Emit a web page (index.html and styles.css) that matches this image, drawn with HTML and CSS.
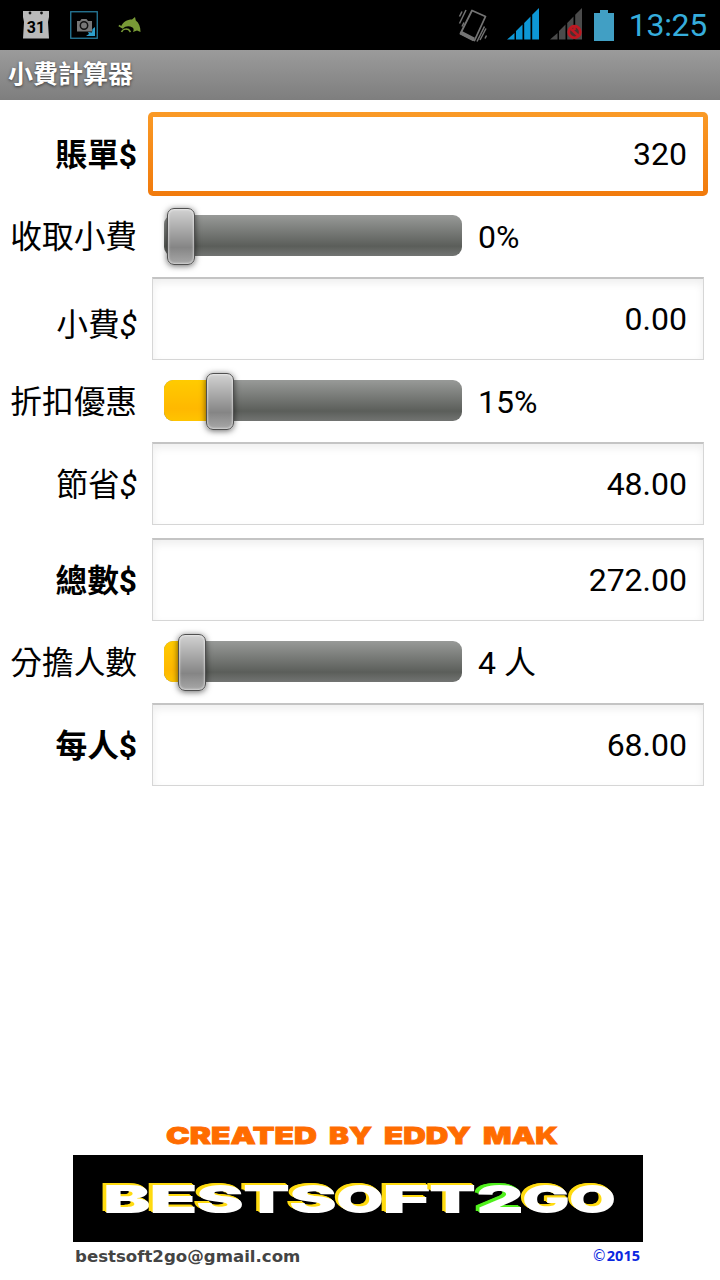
FILE: index.html
```html
<!DOCTYPE html>
<html lang="zh-Hant">
<head>
  <meta charset="UTF-8">
  <meta name="viewport" content="width=device-width, initial-scale=1.0">
  <title>小費計算器</title>
  <link rel="stylesheet" href="styles.css">
</head>
<body>

  <div class="status-bar">
    <div class="notifications">
      <svg class="icon-calendar" width="28" height="30" viewBox="0 0 28 30">
        <path d="M1 1h4a2.600 2.600 0 0 0 5 0h8a2.600 2.600 0 0 0 5 0h4v6l-1 5 1 16.500H1L2 12 1 7z" fill="#b9b9b9"/>
        <path d="M1 1h26v6H1z" fill="#b9b9b9"/>
        <circle cx="8" cy="3" r="1.400" fill="#111"/>
        <circle cx="19.500" cy="3" r="1.400" fill="#111"/>
        <text x="14" y="23" text-anchor="middle" class="calendar-day">31</text>
      </svg>
      <svg class="icon-camera" width="28" height="28" viewBox="0 0 28 28">
        <rect x=".75" y=".75" width="26.500" height="26.500" fill="none" stroke="#277b9b" stroke-width="1.300"/>
        <path d="M7 10h3l1.500-2h5l1.500 2h4v10.500H7z" fill="#777"/>
        <circle cx="14" cy="14.500" r="3.700" fill="#777" stroke="#111" stroke-width="1.500"/>
        <path d="M25 16v9h-9l3-2-1-2 4 .5.500-3.500z" fill="#2e9fcc"/>
      </svg>
      <svg class="icon-dolphin" width="24" height="17" viewBox="0 0 24 17">
        <path d="M3 9.500C5 5 9 2.500 14 2.500L17 0l.8 3.500C21 6 22.500 9.500 22.500 15l-3.500-1.500L15 15c1-2 .8-3.500-.5-4.500C11 8.500 7.500 9 5 11.500z" fill="#789a36"/>
        <path d="M.8 8.500l4.500 2.500M3.500 15c1-2.500 4-3.500 7-2.500l2 2.500" fill="none" stroke="#789a36" stroke-width="1.600"/>
      </svg>
    </div>
    <div class="system-icons">
      <svg class="icon-vibrate" width="30" height="35" viewBox="0 0 30 35">
        <path d="M14 2.500l13.500 6-11 24-14-7z" fill="none" stroke="#747474" stroke-width="1.800" stroke-linejoin="round"/>
        <path d="M2.500 24.500l13.500 7" stroke="#747474" stroke-width="4"/>
        <path d="M1.500 8l2.500-5M1.500 15L8 1.500M4 18l2-4M19 33l7.500-15M22 31.500l6-11.500M27 30l1.500-3" transform="translate(0 .5)" stroke="#747474" stroke-width="1.500"/>
      </svg>
      <svg class="icon-signal" width="32" height="32" viewBox="0 0 32 32">
        <path d="M0 31.500L7.500 25v6.500zM9 23l6.500-6.500v15H9zM17.200 15l6.300-6.500v23h-6.300zM25.200 6.800L32 0v31.500h-6.800z" fill="#0d97d6"/>
      </svg>
      <svg class="icon-no-signal" width="32" height="34" viewBox="0 0 32 34">
        <path d="M0 31.500L7.500 25v6.500zM9 23l6.500-6.500v15H9zM17.200 15l6.300-6.500v23h-6.300zM25.200 6.800L32 0v31.500h-6.800z" fill="#4b4b4b"/>
        <circle cx="24.500" cy="24" r="5.800" fill="#4b3030" stroke="#be1822" stroke-width="2.800"/>
        <path d="M20 20l8.500 8M24.500 19v3" stroke="#be1822" stroke-width="2.500"/>
      </svg>
      <svg class="icon-battery" width="20" height="31" viewBox="0 0 20 31">
        <path d="M6 0h8v3h6v28H0V3h6z" fill="#419fc4"/>
      </svg>
      <span class="clock">13:25</span>
    </div>
  </div>

  <div class="title-bar">小費計算器</div>

  <div class="calculator">
    <div class="row field-row">
      <div class="label bold">賬單$</div>
      <div class="field focused">320</div>
    </div>
    <div class="row slider-row">
      <div class="label">收取小費</div>
      <div class="slider">
        <div class="thumb" style="left: 3px"></div>
      </div>
      <div class="slider-value">0%</div>
    </div>
    <div class="row field-row">
      <div class="label low">小費<i>$</i></div>
      <div class="field">0.00</div>
    </div>
    <div class="row slider-row">
      <div class="label">折扣優惠</div>
      <div class="slider">
        <div class="progress" style="width: 56px"></div>
        <div class="thumb" style="left: 42px"></div>
      </div>
      <div class="slider-value">15%</div>
    </div>
    <div class="row field-row">
      <div class="label">節省<i>$</i></div>
      <div class="field">48.00</div>
    </div>
    <div class="row field-row">
      <div class="label bold">總數$</div>
      <div class="field">272.00</div>
    </div>
    <div class="row slider-row">
      <div class="label">分擔人數</div>
      <div class="slider">
        <div class="progress" style="width: 28px"></div>
        <div class="thumb" style="left: 14px"></div>
      </div>
      <div class="slider-value">4 人</div>
    </div>
    <div class="row field-row">
      <div class="label bold">每人$</div>
      <div class="field">68.00</div>
    </div>
  </div>

  <div class="footer">
    <svg class="created-by" width="570" height="36" viewBox="0 0 570 36">
      <text x="93" y="25" textLength="151" lengthAdjust="spacingAndGlyphs">CREATED</text>
      <text x="256" y="25" textLength="43" lengthAdjust="spacingAndGlyphs">BY</text>
      <text x="311" y="25" textLength="87" lengthAdjust="spacingAndGlyphs">EDDY</text>
      <text x="410" y="25" textLength="75" lengthAdjust="spacingAndGlyphs">MAK</text>
    </svg>
    <svg class="logo" width="570" height="87" viewBox="0 0 570 87">
      <g class="logo-text">
        <text x="30" y="58" textLength="48" lengthAdjust="spacingAndGlyphs">B</text>
        <text x="76" y="58" textLength="49" lengthAdjust="spacingAndGlyphs">E</text>
        <text x="123" y="58" textLength="48" lengthAdjust="spacingAndGlyphs">S</text>
        <text x="170" y="58" textLength="47" lengthAdjust="spacingAndGlyphs">T</text>
        <text x="216" y="58" textLength="48" lengthAdjust="spacingAndGlyphs">S</text>
        <text x="263" y="58" textLength="48" lengthAdjust="spacingAndGlyphs">O</text>
        <text x="309" y="58" textLength="49" lengthAdjust="spacingAndGlyphs">F</text>
        <text x="356" y="58" textLength="47" lengthAdjust="spacingAndGlyphs">T</text>
        <text x="403" y="58" textLength="48" lengthAdjust="spacingAndGlyphs" class="logo-two">2</text>
        <text x="449" y="58" textLength="48" lengthAdjust="spacingAndGlyphs">G</text>
        <text x="496" y="58" textLength="47" lengthAdjust="spacingAndGlyphs">O</text>
      </g>
    </svg>
    <div class="contact">
      <span class="email">bestsoft2go@gmail.com</span>
      <span class="copyright"><span class="copy-sign">©</span>2015</span>
    </div>
  </div>

</body>
</html>
```

FILE: styles.css
```css
body {
  margin: 0;
  height: 1280px;
  display: flex;
  flex-direction: column;
  overflow: hidden;
  background: #fff;
  color: #000;
  font-family: Roboto, "Noto Sans CJK TC", sans-serif;
  font-size: 32px;
}

.status-bar {
  height: 50px;
  display: flex;
  justify-content: space-between;
  background: #000;
}

.notifications,
.system-icons {
  display: flex;
  align-items: center;
}

.notifications {
  padding-left: 22px;
}

.icon-camera {
  margin-left: 20px;
}

.icon-dolphin {
  margin-left: 20px;
}

.calendar-day {
  font-size: 16px;
  font-weight: bold;
}

.system-icons {
  padding-right: 13px;
}

.icon-signal {
  margin: 0 11px 2px 19px;
}

.icon-battery {
  margin: 0 15px 0 12px;
}

.clock {
  color: #36addc;
  font-size: 32px;
  letter-spacing: -0.3px;
  line-height: 52px;
}

.title-bar {
  height: 50px;
  padding-left: 8px;
  line-height: 50px;
  background: linear-gradient(#9b9b9b, #7e7e7e);
  color: #fff;
  font-size: 25px;
  font-weight: bold;
  text-shadow: 0 1px 3px rgba(0,0,0,0.6);
}

.calculator {
  padding-top: 6px;
}

.row {
  display: flex;
  align-items: center;
}

.field-row {
  height: 96px;
}

.slider-row {
  height: 69px;
}

.label {
  width: 137px;
  padding-top: 3px;
  text-align: right;
  font-size: 31.7px;
  line-height: 48px;
  white-space: nowrap;
}

.bold {
  font-weight: bold;
}

.low {
  padding-top: 13px;
}

.field {
  box-sizing: border-box;
  width: 552px;
  height: 83px;
  margin: 0 0 1px 15px;
  padding-right: 16px;
  border: 1px solid #d6d6d6;
  border-top: 2px solid #c4c4c4;
  box-shadow: inset 0 4px 8px rgba(0,0,0,0.07);
  line-height: 80px;
  text-align: right;
}

.focused {
  width: 560px;
  height: 84px;
  margin: 0 0 0 11px;
  border: 5px solid transparent;
  border-radius: 5px;
  background: linear-gradient(#fff, #fff) padding-box, linear-gradient(#fa9a26, #f17a0c) border-box;
  box-shadow: none;
  line-height: 74px;
}

.slider {
  position: relative;
  width: 298px;
  height: 41px;
  margin: 0 16px 2px 27px;
  border-radius: 9px;
  background: linear-gradient(#989a98, #5b5e5a 76%, #727472);
}

.slider-value {
  line-height: 48px;
}

.progress {
  height: 41px;
  border-radius: 9px 0 0 9px;
  background: linear-gradient(#ffcb00, #ffb800 70%, #ffc400);
}

.thumb {
  position: absolute;
  top: -7px;
  box-sizing: border-box;
  width: 28px;
  height: 57px;
  border: 1px solid #505050;
  border-radius: 7px;
  background: linear-gradient(#d2d2d2, #858585 70%, #a8a8a8);
  box-shadow: inset 0 0 2px 1px rgba(255,255,255,0.5), 0 1px 6px rgba(0,0,0,0.6);
}

.footer {
  width: 570px;
  height: 161px;
  margin: auto 0 0 73px;
}

.footer svg {
  display: block;
}

.created-by text {
  font-family: Inter, sans-serif;
  font-size: 23px;
  font-weight: 900;
  fill: #ff6c00;
  stroke: #ff6c00;
  stroke-width: 0.8px;
}

.logo {
  background: #000;
}

.logo-text {
  font-family: Inter, sans-serif;
  font-size: 39px;
  font-weight: 900;
  fill: #fff;
  text-shadow: -0.7px -1px #ffdb10, -1.4px -2px #ffdb10, -2px -2px #ffdb10;
}

.logo-two {
  text-shadow: -0.7px -1px #50f01c, -1.4px -2px #50f01c, -2px -2px #50f01c;
}

.contact {
  display: flex;
  justify-content: space-between;
  padding: 0 3px 0 2px;
  font-family: "DejaVu Sans", sans-serif;
  font-weight: bold;
  line-height: 28px;
}

.email {
  color: #444;
  font-size: 16.6px;
  line-height: 29px;
}

.copyright {
  color: #0b28e0;
  font-family: "Noto Sans", sans-serif;
  font-size: 14.5px;
  line-height: 26px;
}

.copy-sign {
  font-family: "DejaVu Sans", sans-serif;
  font-size: 15px;
  font-weight: normal;
}
```
